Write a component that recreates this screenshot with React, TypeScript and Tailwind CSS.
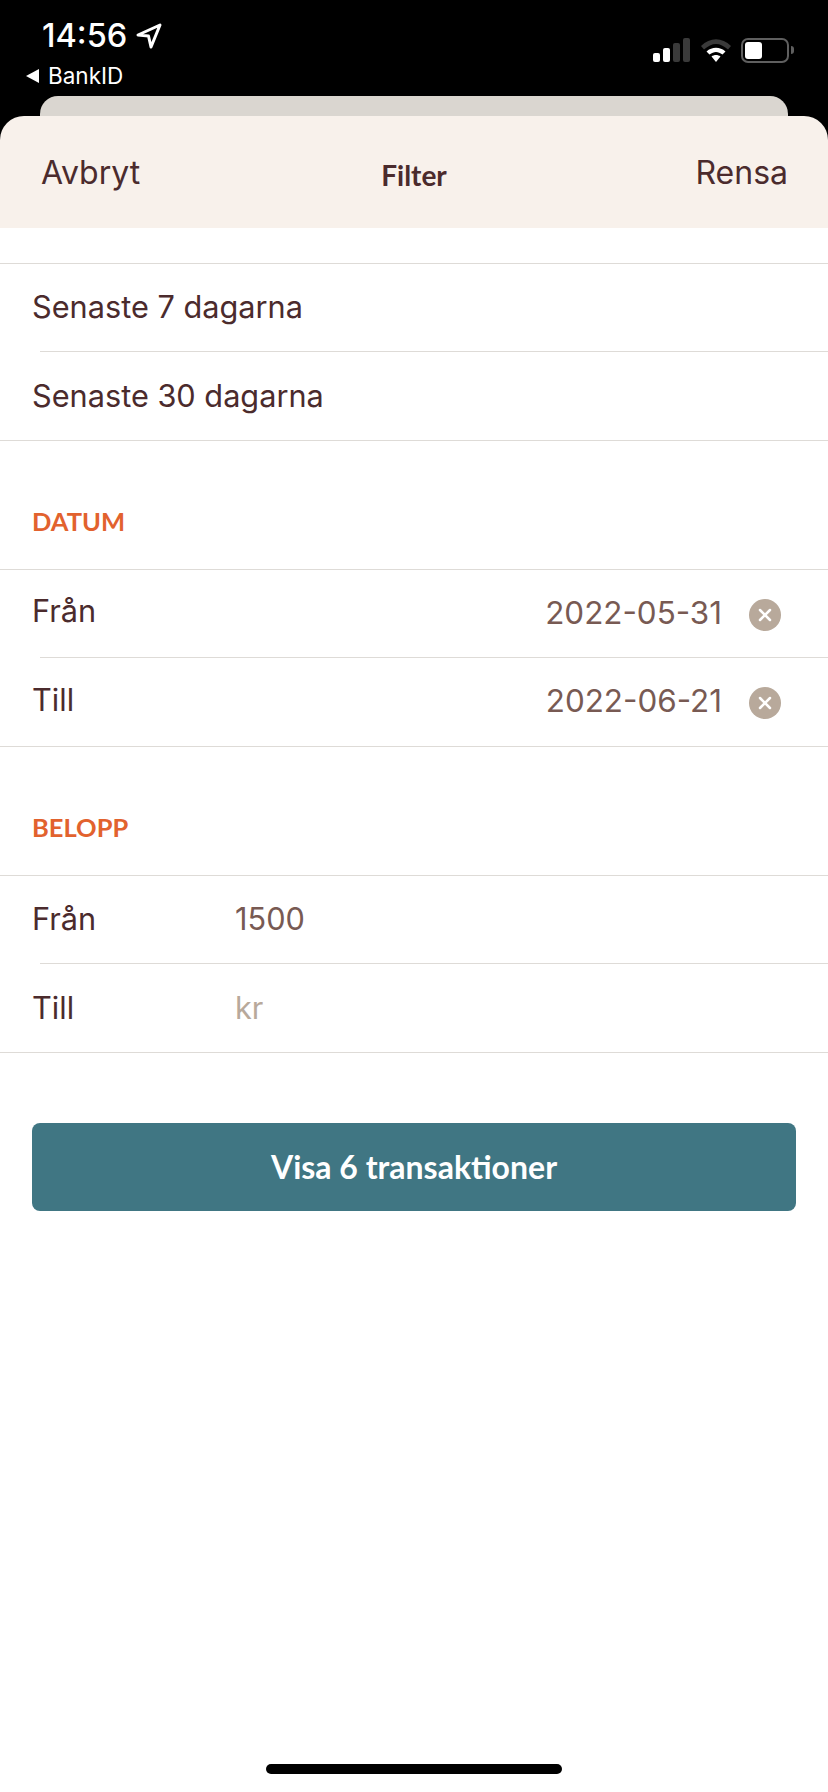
import React from 'react';
import { X } from 'lucide-react';

const Signal = () => (
  <svg width="38" height="24" viewBox="0 0 38 24" className="block">
    <rect x="0" y="15" width="7" height="9" rx="2" fill="#fff" />
    <rect x="10" y="10" width="7" height="14" rx="2" fill="#fff" />
    <rect x="20" y="5" width="7" height="19" rx="2" fill="#3a3a3a" />
    <rect x="30" y="0" width="7" height="24" rx="2" fill="#3a3a3a" />
  </svg>
);

const Wifi = () => (
  <svg width="32" height="24" viewBox="0 0 32 24" className="block">
    <path d="M1 8 C10 -1 22 -1 31 8 L28 11.5 C20 4 12 4 4 11.5 Z" fill="#3a3a3a" />
    <path d="M6.5 13.5 C12 8.5 20 8.5 25.5 13.5 L22.5 16.5 C18 13 14 13 9.5 16.5 Z" fill="#fff" />
    <path d="M11.5 18.5 C14 16.5 18 16.5 20.5 18.5 L16 24 Z" fill="#fff" />
  </svg>
);

const Battery = () => (
  <div className="flex items-center gap-[2px]">
    <div className="w-[48px] h-[25px] rounded-[7px] border-2 border-[#5f5f5f] p-[2px]">
      <div className="w-[17px] h-full rounded-[3px] bg-white" />
    </div>
    <div className="w-[3px] h-[8px] rounded-r-sm bg-[#5f5f5f]" />
  </div>
);

const Clear = () => (
  <div className="w-8 h-8 rounded-full bg-[#b8a99b] flex items-center justify-center">
    <X size={20} strokeWidth={3} color="#fff" />
  </div>
);

// first row of a group is 87px, second 88px, as in the reference
const Row = ({ children, tall }: { children: React.ReactNode; tall?: boolean }) => (
  <div className={`${tall ? 'h-[88px]' : 'h-[87px]'} flex items-center pl-8 text-[30.7px] text-[#4b2b2d]`}>{children}</div>
);

const Line = ({ inset }: { inset?: boolean }) => (
  <div className={`h-px bg-[#dedbd7] ${inset ? 'ml-10' : ''}`} />
);

const SectionTitle = ({ children }: { children: React.ReactNode }) => (
  <div className="h-[128px] pl-8 pt-[32px] flex items-center font-['Lato',sans-serif] text-[25.5px] font-bold text-[#e2622e]">{children}</div>
);

export default function App() {
  return (
    <div className="w-[828px] h-[1792px] bg-white flex flex-col overflow-hidden relative font-['Inter','Liberation_Sans',sans-serif]">
      {/* status bar */}
      <div className="bg-black h-[116px] relative shrink-0">
        <div className="flex justify-between pt-[16px] pl-[42px] pr-[34px]">
          <div className="flex items-center gap-[9px] h-[40px] text-white text-[32.500px] font-medium leading-none">
            14:56
            <svg width="26" height="26" viewBox="0 0 26 26" fill="none" stroke="#fff" strokeWidth="3" strokeLinejoin="round" className="block">
              <path d="M2 12 L24 2 L15 24 L12.5 13 Z" />
            </svg>
          </div>
          <div className="flex items-center gap-[9px] h-[32px] mt-[18px]">
            <Signal />
            <Wifi />
            <Battery />
          </div>
        </div>
        <div className="absolute left-[26px] top-[65px] flex items-center gap-[9px] text-white text-[22.500px] leading-none">
          <span className="w-0 h-0 border-y-[7px] border-y-transparent border-r-[13px] border-r-white" />
          BankID
        </div>
        <div className="absolute left-[40px] right-[40px] top-[96px] h-[20px] bg-[#dad6d0] rounded-t-[18px]" />
      </div>

      {/* sheet header */}
      <div className="bg-black shrink-0">
        <div className="h-[112px] bg-[#f8f1eb] rounded-t-[24px] flex items-center justify-between pl-[41px] pr-[40px] pt-[2px] text-[#4b2b2d] text-[32px] relative">
          <span>Avbryt</span>
          <span className="absolute left-0 right-0 mt-[3px] text-center font-['Lato',sans-serif] text-[28px] font-bold">Filter</span>
          <span>Rensa</span>
        </div>
      </div>

      <div className="h-[35px] shrink-0" />
      <Line />
      <Row>Senaste 7 dagarna</Row>
      <Line inset />
      <Row tall>Senaste 30 dagarna</Row>
      <Line />

      <SectionTitle>DATUM</SectionTitle>
      <Line />
      <Row>
        <span className="flex-1 -mt-1">Från</span>
        <span className="text-[#785a53] text-[31.400px] mr-[27px]">2022-05-31</span>
        <span className="mr-[47px] mt-[2px]"><Clear /></span>
      </Row>
      <Line inset />
      <Row tall>
        <span className="flex-1 -mt-1">Till</span>
        <span className="text-[#785a53] text-[31.400px] mr-[27px]">2022-06-21</span>
        <span className="mr-[47px] mt-[2px]"><Clear /></span>
      </Row>
      <Line />

      <SectionTitle>BELOPP</SectionTitle>
      <Line />
      <Row>
        <span className="w-[203px]">Från</span>
        <span className="text-[#785a53]">1500</span>
      </Row>
      <Line inset />
      <Row tall>
        <span className="w-[203px]">Till</span>
        <span className="text-[#b8a99b]">kr</span>
      </Row>
      <Line />

      <button className="mx-8 mt-[70px] h-[88px] rounded-[8px] bg-[#407683] text-white font-['Lato',sans-serif] text-[32px] font-bold">
        Visa 6 transaktioner
      </button>

      <div className="absolute left-[266px] bottom-[18px] w-[296px] h-[10px] rounded-full bg-black" />
    </div>
  );
}
